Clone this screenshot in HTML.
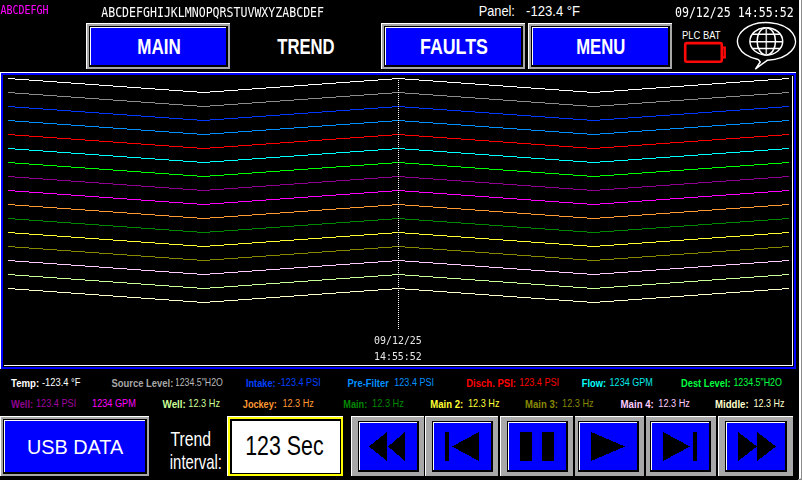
<!DOCTYPE html>
<html><head><meta charset="utf-8"><title>TREND</title>
<style>
html,body{margin:0;padding:0;background:#000;}
body{width:802px;height:480px;position:relative;overflow:hidden;font-family:"Liberation Sans",sans-serif;}
i{position:absolute;display:block;}
svg{position:absolute;left:0;top:0;}
text{white-space:pre;}
</style></head><body>
<i style="left:86px;top:23px;width:144px;height:46px;background:#ffffff"></i><i style="left:87px;top:24px;width:143px;height:45px;background:#a8a8a8"></i><i style="left:89px;top:26px;width:139px;height:41px;background:#000"></i><i style="left:90px;top:27px;width:136px;height:38px;background:#ffffff"></i><i style="left:91px;top:28px;width:135px;height:37px;background:#0000ff"></i><i style="left:381px;top:23px;width:144px;height:46px;background:#ffffff"></i><i style="left:382px;top:24px;width:143px;height:45px;background:#a8a8a8"></i><i style="left:384px;top:26px;width:139px;height:41px;background:#000"></i><i style="left:385px;top:27px;width:136px;height:38px;background:#ffffff"></i><i style="left:386px;top:28px;width:135px;height:37px;background:#0000ff"></i><i style="left:528px;top:23px;width:144px;height:46px;background:#ffffff"></i><i style="left:529px;top:24px;width:143px;height:45px;background:#a8a8a8"></i><i style="left:531px;top:26px;width:139px;height:41px;background:#000"></i><i style="left:532px;top:27px;width:136px;height:38px;background:#ffffff"></i><i style="left:533px;top:28px;width:135px;height:37px;background:#0000ff"></i><i style="left:0px;top:416px;width:149px;height:60px;background:#ffffff"></i><i style="left:1px;top:417px;width:148px;height:59px;background:#a8a8a8"></i><i style="left:3px;top:419px;width:144px;height:55px;background:#000"></i><i style="left:4px;top:420px;width:141px;height:52px;background:#ffffff"></i><i style="left:5px;top:421px;width:140px;height:51px;background:#0000ff"></i><i style="left:227px;top:416px;width:116px;height:60px;background:#ffffff"></i><i style="left:228px;top:417px;width:115px;height:59px;background:#ffff00"></i><i style="left:230px;top:419px;width:111px;height:55px;background:#000"></i><i style="left:232px;top:421px;width:108px;height:52px;background:#ffffff"></i><i style="left:351px;top:416px;width:73px;height:60px;background:#ffffff"></i><i style="left:352px;top:417px;width:72px;height:59px;background:#a8a8a8"></i><i style="left:358px;top:421px;width:61px;height:51px;background:#000"></i><i style="left:359px;top:422px;width:58px;height:48px;background:#ffffff"></i><i style="left:360px;top:423px;width:57px;height:47px;background:#0000ff"></i><i style="left:425px;top:416px;width:73px;height:60px;background:#ffffff"></i><i style="left:426px;top:417px;width:72px;height:59px;background:#a8a8a8"></i><i style="left:432px;top:421px;width:61px;height:51px;background:#000"></i><i style="left:433px;top:422px;width:58px;height:48px;background:#ffffff"></i><i style="left:434px;top:423px;width:57px;height:47px;background:#0000ff"></i><i style="left:500px;top:416px;width:73px;height:60px;background:#ffffff"></i><i style="left:501px;top:417px;width:72px;height:59px;background:#a8a8a8"></i><i style="left:507px;top:421px;width:61px;height:51px;background:#000"></i><i style="left:508px;top:422px;width:58px;height:48px;background:#ffffff"></i><i style="left:509px;top:423px;width:57px;height:47px;background:#0000ff"></i><i style="left:575px;top:416px;width:69px;height:60px;background:#ffffff"></i><i style="left:575px;top:417px;width:69px;height:59px;background:#a8a8a8"></i><i style="left:578px;top:421px;width:61px;height:51px;background:#000"></i><i style="left:579px;top:422px;width:58px;height:48px;background:#ffffff"></i><i style="left:580px;top:423px;width:57px;height:47px;background:#0000ff"></i><i style="left:646px;top:416px;width:70px;height:60px;background:#ffffff"></i><i style="left:646px;top:417px;width:70px;height:59px;background:#a8a8a8"></i><i style="left:650px;top:421px;width:61px;height:51px;background:#000"></i><i style="left:651px;top:422px;width:58px;height:48px;background:#ffffff"></i><i style="left:652px;top:423px;width:57px;height:47px;background:#0000ff"></i><i style="left:718px;top:416px;width:75px;height:60px;background:#ffffff"></i><i style="left:719px;top:417px;width:74px;height:59px;background:#a8a8a8"></i><i style="left:725px;top:421px;width:62px;height:51px;background:#000"></i><i style="left:726px;top:422px;width:59px;height:48px;background:#ffffff"></i><i style="left:727px;top:423px;width:58px;height:47px;background:#0000ff"></i><i style="left:0px;top:72px;width:796px;height:297px;background:#ffffff"></i><i style="left:1px;top:73px;width:795px;height:296px;background:#0000ff"></i><i style="left:3px;top:75px;width:791px;height:292px;background:#000"></i><i style="left:4px;top:365px;width:789px;height:1px;background:#ffffff"></i><i style="left:792px;top:76px;width:1px;height:290px;background:#ffffff"></i><i style="left:799px;top:0px;width:2px;height:480px;background:#ffffff"></i><i style="left:801px;top:0px;width:1px;height:480px;background:#8c8c8c"></i><i style="left:800px;top:478px;width:1px;height:1px;background:#c4c4c4"></i><i style="left:798px;top:479px;width:4px;height:1px;background:#858585"></i>
<svg width="802" height="480" viewBox="0 0 802 480">
<defs><filter id="mg" x="-5%" y="-20%" width="110%" height="140%" color-interpolation-filters="sRGB"><feColorMatrix type="matrix" values="0.33 0.34 0.33 0 0  0 0 0 0 0  0.33 0.34 0.33 0 0  0 0 0 1 0"/></filter><clipPath id="cl" clipPathUnits="userSpaceOnUse"><rect x="176" y="370" width="60" height="24"/></clipPath><path id="ln" d="M8 0.5h7M15 1.5h14M29 2.5h14M43 3.5h14M57 4.5h14M71 5.5h14M85 6.5h14M99 7.5h14M113 8.5h14M127 9.5h14M141 10.5h14M155 11.5h14M169 12.5h14M183 13.5h14M197 14.5h13M210 13.5h14M224 12.5h14M238 11.5h14M252 10.5h14M266 9.5h14M280 8.5h14M294 7.5h14M308 6.5h14M322 5.5h14M336 4.5h14M350 3.5h14M364 2.5h14M378 1.5h14M392 0.5h13M405 1.5h14M419 2.5h14M433 3.5h14M447 4.5h14M461 5.5h14M475 6.5h14M489 7.5h14M503 8.5h14M517 9.5h14M531 10.5h14M545 11.5h14M559 12.5h14M573 13.5h14M587 14.5h13M600 13.5h14M614 12.5h14M628 11.5h14M642 10.5h14M656 9.5h14M670 8.5h14M684 7.5h14M698 6.5h14M712 5.5h14M726 4.5h14M740 3.5h14M754 2.5h14M768 1.5h14M782 0.5h7" fill="none" stroke-width="1"/></defs><use href="#ln" y="78" stroke="#ffffff"/><use href="#ln" y="92" stroke="#8c8c8c"/><use href="#ln" y="106" stroke="#0038ff"/><use href="#ln" y="120" stroke="#0090ff"/><use href="#ln" y="134" stroke="#ff0000"/><use href="#ln" y="148" stroke="#00ffff"/><use href="#ln" y="162" stroke="#00ff00"/><use href="#ln" y="176" stroke="#900090"/><use href="#ln" y="190" stroke="#ff00ff"/><use href="#ln" y="204" stroke="#ff9933"/><use href="#ln" y="218" stroke="#008800"/><use href="#ln" y="232" stroke="#ffff33"/><use href="#ln" y="246" stroke="#888800"/><use href="#ln" y="260" stroke="#ffccff"/><use href="#ln" y="274" stroke="#ccff99"/><use href="#ln" y="288" stroke="#ffffcc"/><path d="M398.5 80V330" stroke="#fff" stroke-width="1" stroke-dasharray="1 1" fill="none"/>
<g fill="#000" shape-rendering="crispEdges"><path d="M369 446.5L387 432.0V461.0Z"/><path d="M388 446.5L405 432.0V461.0Z"/><rect x="445" y="432" width="4" height="29"/><path d="M452 446.5L479 432.0V461.0Z"/><rect x="520" y="432" width="12" height="29"/><rect x="542" y="432" width="12" height="29"/><path d="M625 446.5L591 432.0V461.0Z"/><path d="M690 446.5L663 432.0V461.0Z"/><rect x="693" y="432" width="4" height="29"/><path d="M757 446.5L738 432.0V461.0Z"/><path d="M776 446.5L757 432.0V461.0Z"/></g><rect x="685.2" y="43.1" width="36.6" height="18.6" rx="1.6" fill="none" stroke="#ff0808" stroke-width="2.6"/><path d="M722.5 47.6H724.7V57.4H722.5" fill="none" stroke="#ff0808" stroke-width="2.4"/><g fill="none" stroke="#fff" stroke-width="1.5" stroke-linejoin="round"><path d="M758.3 59.39A29 18.8 0 1 1 767.5 60.14L765.5 61.6L755.6 68.8L760.2 62L758.3 59.39"/><ellipse cx="766.3" cy="41.35" rx="16.4" ry="13.7"/><ellipse cx="766.3" cy="41.35" rx="9.2" ry="13.7"/><path d="M766.3 27.6V55" stroke="#ccc" stroke-width="1.6"/><path d="M752.2 34.3H780.4M750 41.8H782.6M752.4 48.6H780.2"/></g>
<g xml:space="preserve">
<text transform="translate(0.60 14.00) scale(0.8056 1)" font-family='"DejaVu Sans Mono", "Liberation Mono", monospace' font-weight="normal" font-size="12.35" fill="#ffffff" filter="url(#mg)">ABCDEFGH</text>
<text transform="translate(478.70 16.20) scale(0.8529 1)" font-family='"Liberation Sans", sans-serif' font-weight="normal" font-size="14.97" fill="#ffffff">Panel:</text>
<text transform="translate(526.10 16.20) scale(0.8730 1)" font-family='"Liberation Sans", sans-serif' font-weight="normal" font-size="14.97" fill="#ffffff">-123.4 °F</text>
<text transform="translate(137.20 53.70) scale(0.7987 1)" font-family='"Liberation Sans", sans-serif' font-weight="bold" font-size="21.37" fill="#ffffff">MAIN</text>
<text transform="translate(277.20 53.70) scale(0.7800 1)" font-family='"Liberation Sans", sans-serif' font-weight="bold" font-size="21.37" fill="#ffffff">TREND</text>
<text transform="translate(420.00 53.70) scale(0.8332 1)" font-family='"Liberation Sans", sans-serif' font-weight="bold" font-size="21.37" fill="#ffffff">FAULTS</text>
<text transform="translate(576.20 53.70) scale(0.7822 1)" font-family='"Liberation Sans", sans-serif' font-weight="bold" font-size="21.37" fill="#ffffff">MENU</text>
<text transform="translate(682.00 38.80) scale(0.8424 1)" font-family='"Liberation Sans", sans-serif' font-weight="normal" font-size="11.19" fill="#ffffff">PLC BAT</text>
<text transform="translate(11.00 386.60) scale(0.8725 1)" font-family='"Liberation Sans", sans-serif' font-weight="bold" font-size="11.05" fill="#ffffff">Temp:</text>
<text transform="translate(42.00 385.80) scale(0.8451 1)" font-family='"Liberation Sans", sans-serif' font-weight="normal" font-size="11.05" fill="#ffffff">-123.4 °F</text>
<text transform="translate(111.50 386.60) scale(0.8531 1)" font-family='"Liberation Sans", sans-serif' font-weight="bold" font-size="11.05" fill="#a8a8a8">Source Level:</text>
<g clip-path="url(#cl)"><text transform="translate(174.80 385.80) scale(0.7977 1)" font-family='"Liberation Sans", sans-serif' font-weight="normal" font-size="11.05" fill="#b8b8b8">1234.5&quot;H2O</text></g>
<text transform="translate(245.90 386.60) scale(0.8370 1)" font-family='"Liberation Sans", sans-serif' font-weight="bold" font-size="11.05" fill="#0040ff">Intake:</text>
<text transform="translate(277.70 385.80) scale(0.8258 1)" font-family='"Liberation Sans", sans-serif' font-weight="normal" font-size="11.05" fill="#0040ff">-123.4 PSI</text>
<text transform="translate(347.60 386.60) scale(0.8496 1)" font-family='"Liberation Sans", sans-serif' font-weight="bold" font-size="11.05" fill="#0090ff">Pre-Filter</text>
<text transform="translate(394.30 385.80) scale(0.8203 1)" font-family='"Liberation Sans", sans-serif' font-weight="normal" font-size="11.05" fill="#0090ff">123.4 PSI</text>
<text transform="translate(466.20 386.60) scale(0.8630 1)" font-family='"Liberation Sans", sans-serif' font-weight="bold" font-size="11.05" fill="#ff0000">Disch. PSI:</text>
<text transform="translate(519.20 385.80) scale(0.8224 1)" font-family='"Liberation Sans", sans-serif' font-weight="normal" font-size="11.05" fill="#ff0000">123.4 PSI</text>
<text transform="translate(581.70 386.60) scale(0.8428 1)" font-family='"Liberation Sans", sans-serif' font-weight="bold" font-size="11.05" fill="#00ffff">Flow:</text>
<text transform="translate(609.60 385.80) scale(0.8181 1)" font-family='"Liberation Sans", sans-serif' font-weight="normal" font-size="11.05" fill="#00e8e8">1234 GPM</text>
<text transform="translate(681.00 386.60) scale(0.8416 1)" font-family='"Liberation Sans", sans-serif' font-weight="bold" font-size="11.05" fill="#00ff40">Dest Level:</text>
<text transform="translate(733.40 385.80) scale(0.8043 1)" font-family='"Liberation Sans", sans-serif' font-weight="normal" font-size="11.05" fill="#00ff40">1234.5&quot;H2O</text>
<text transform="translate(11.00 407.80) scale(0.8476 1)" font-family='"Liberation Sans", sans-serif' font-weight="bold" font-size="11.05" fill="#900090">Well:</text>
<text transform="translate(36.00 406.70) scale(0.8306 1)" font-family='"Liberation Sans", sans-serif' font-weight="normal" font-size="11.05" fill="#a000a0">123.4 PSI</text>
<text transform="translate(92.10 406.70) scale(0.8276 1)" font-family='"Liberation Sans", sans-serif' font-weight="normal" font-size="11.05" fill="#ff00ff">1234 GPM</text>
<text transform="translate(162.50 407.80) scale(0.8934 1)" font-family='"Liberation Sans", sans-serif' font-weight="bold" font-size="11.05" fill="#ccff99">Well:</text>
<text transform="translate(188.30 406.70) scale(0.8328 1)" font-family='"Liberation Sans", sans-serif' font-weight="normal" font-size="11.05" fill="#ccff99">12.3 Hz</text>
<text transform="translate(242.80 407.80) scale(0.8287 1)" font-family='"Liberation Sans", sans-serif' font-weight="bold" font-size="11.05" fill="#ff9933">Jockey:</text>
<text transform="translate(282.40 406.70) scale(0.8275 1)" font-family='"Liberation Sans", sans-serif' font-weight="normal" font-size="11.05" fill="#ff9933">12.3 Hz</text>
<text transform="translate(343.30 407.80) scale(0.8321 1)" font-family='"Liberation Sans", sans-serif' font-weight="bold" font-size="11.05" fill="#008800">Main:</text>
<text transform="translate(372.10 406.70) scale(0.8354 1)" font-family='"Liberation Sans", sans-serif' font-weight="normal" font-size="11.05" fill="#008800">12.3 Hz</text>
<text transform="translate(430.30 407.80) scale(0.8645 1)" font-family='"Liberation Sans", sans-serif' font-weight="bold" font-size="11.05" fill="#ffff33">Main 2:</text>
<text transform="translate(468.00 406.70) scale(0.8301 1)" font-family='"Liberation Sans", sans-serif' font-weight="normal" font-size="11.05" fill="#ffff33">12.3 Hz</text>
<text transform="translate(525.10 407.80) scale(0.8645 1)" font-family='"Liberation Sans", sans-serif' font-weight="bold" font-size="11.05" fill="#888800">Main 3:</text>
<text transform="translate(562.10 406.70) scale(0.8301 1)" font-family='"Liberation Sans", sans-serif' font-weight="normal" font-size="11.05" fill="#888800">12.3 Hz</text>
<text transform="translate(620.60 407.80) scale(0.8724 1)" font-family='"Liberation Sans", sans-serif' font-weight="bold" font-size="11.05" fill="#ffccff">Main 4:</text>
<text transform="translate(658.30 406.70) scale(0.8275 1)" font-family='"Liberation Sans", sans-serif' font-weight="normal" font-size="11.05" fill="#ffccff">12.3 Hz</text>
<text transform="translate(715.00 407.80) scale(0.8691 1)" font-family='"Liberation Sans", sans-serif' font-weight="bold" font-size="11.05" fill="#ffffcc">Middle:</text>
<text transform="translate(753.40 406.70) scale(0.8170 1)" font-family='"Liberation Sans", sans-serif' font-weight="normal" font-size="11.05" fill="#ffffcc">12.3 Hz</text>
<text transform="translate(26.90 453.60) scale(1.0049 1)" font-family='"Liberation Sans", sans-serif' font-weight="normal" font-size="19.77" fill="#ffffff">USB DATA</text>
<text transform="translate(170.40 446.00) scale(0.8035 1)" font-family='"Liberation Sans", sans-serif' font-weight="normal" font-size="19.62" fill="#ffffff">Trend</text>
<text transform="translate(169.80 469.00) scale(0.7599 1)" font-family='"Liberation Sans", sans-serif' font-weight="normal" font-size="19.62" fill="#ffffff">interval:</text>
<text transform="translate(245.20 454.90) scale(0.7862 1)" font-family='"Liberation Sans", sans-serif' font-weight="normal" font-size="27.18" fill="#000000">123 Sec</text>
</g>
<g xml:space="preserve" style="filter:grayscale(1)">
<text transform="translate(101.20 16.50) scale(0.7968 1)" font-family='"DejaVu Sans Mono", "Liberation Mono", monospace' font-weight="normal" font-size="14.54" fill="#ffffff">ABCDEFGHIJKLMNOPQRSTUVWXYZABCDEF</text>
<text transform="translate(674.90 16.90) scale(0.8143 1)" font-family='"DejaVu Sans Mono", "Liberation Mono", monospace' font-weight="normal" font-size="14.27" fill="#ffffff">09/12/25 14:55:52</text>
<text transform="translate(374.00 344.00) scale(0.9063 1)" font-family='"DejaVu Sans Mono", "Liberation Mono", monospace' font-weight="normal" font-size="10.97" fill="#e8e8e8">09/12/25</text>
<text transform="translate(374.00 360.00) scale(0.9044 1)" font-family='"DejaVu Sans Mono", "Liberation Mono", monospace' font-weight="normal" font-size="10.97" fill="#e8e8e8">14:55:52</text>
</g>
</svg>
</body></html>
